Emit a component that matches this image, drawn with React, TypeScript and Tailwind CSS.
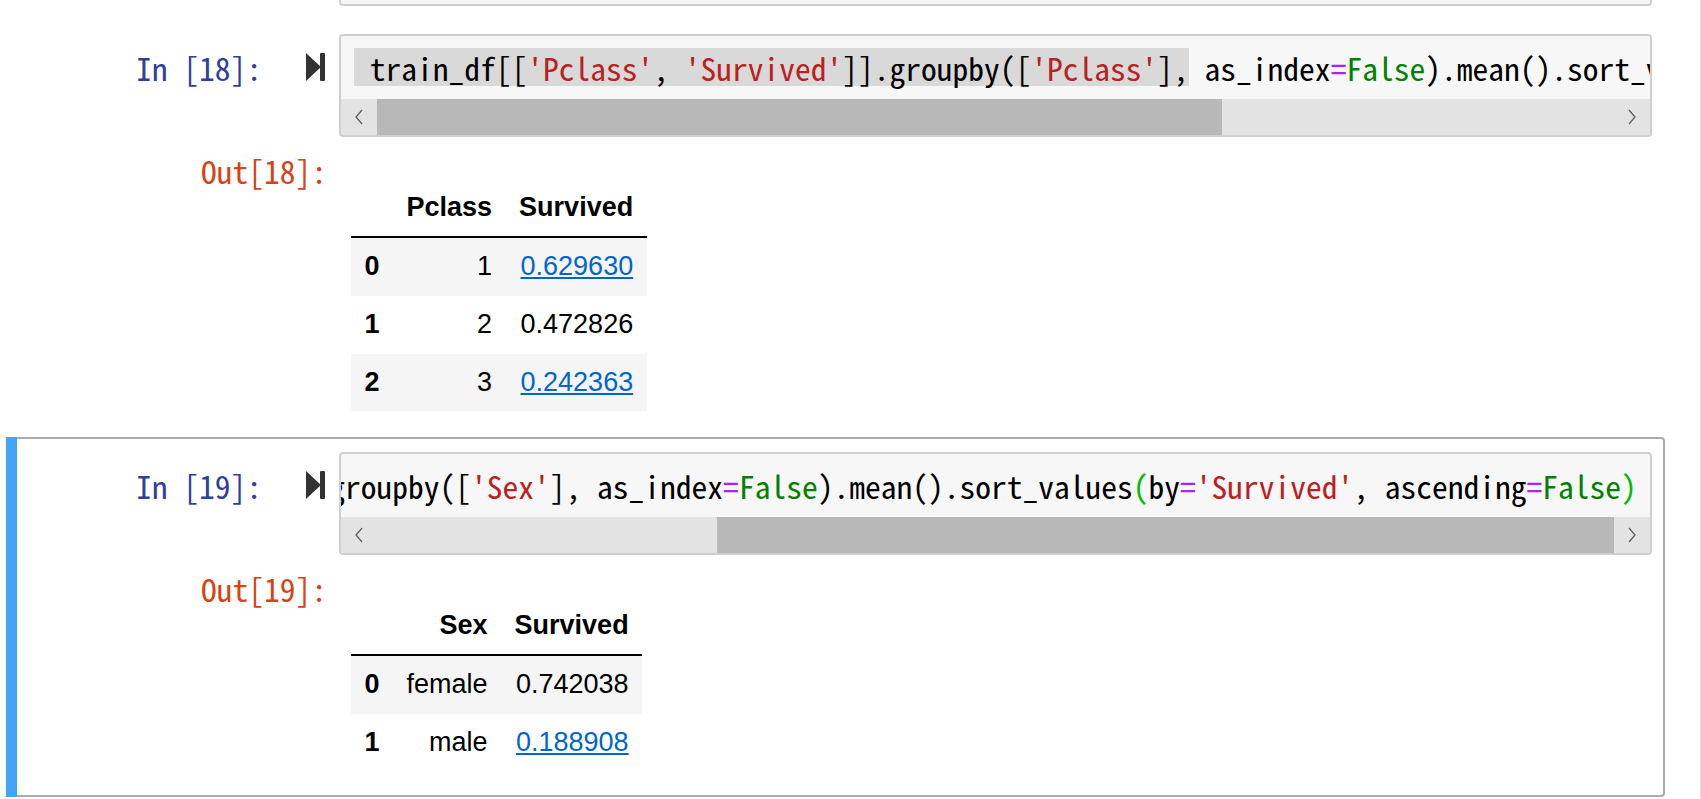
import React from 'react';

type Tok = [string, string];

const S = 'text-[#ba2121]';
const O = 'text-[#aa22ff]';
const K = 'text-[#008000]';
const B = 'text-[#00bb00]';
const N = 'text-black';

const mono = "font-['Noto_Sans_Mono_CJK_KR','Noto_Sans_Mono_CJK_SC','Liberation_Mono',monospace] text-[31.5px] leading-[38.25px]";

const Tokens = ({ toks }: { toks: Tok[] }) => (
    <>
        {toks.map(([t, c], i) => (
            <span key={i} className={c}>{t}</span>
        ))}
    </>
);

const RunIcon = () => (
    <svg width="19" height="28" viewBox="0 0 19 28">
        <polygon points="0,0 15,14 0,28" fill="#333333" />
        <rect x="14" y="0" width="5" height="28" rx="1" fill="#333333" />
    </svg>
);

const Chevron = ({ dir }: { dir: 'left' | 'right' }) => (
    <svg width="10" height="16" viewBox="0 0 10 16">
        <path d={dir === 'left' ? 'M8 1 L2 8 L8 15' : 'M2 1 L8 8 L2 15'} stroke="#606060" strokeWidth="1.3" fill="none" />
    </svg>
);

const Scrollbar = ({ thumb }: { thumb: string }) => (
    <div className="flex h-[36px] bg-[#e3e3e3]">
        <div className="w-[36px] flex items-center justify-center"><Chevron dir="left" /></div>
        <div className="flex-1 flex">
            <div className={thumb} />
        </div>
        <div className="w-[36px] flex items-center justify-center"><Chevron dir="right" /></div>
    </div>
);

type CellProps = {
    n: number;
    selected?: boolean;
    line: React.ReactNode;
    lineOffset: string;
    thumb: string;
    table: React.ReactNode;
};

const Cell = ({ n, selected, line, lineOffset, thumb, table }: CellProps) => (
    <div className={`relative w-[1659px] border-2 rounded-[4px] px-[11px] pt-[12.5px] pb-[12px] ${selected ? 'border-[#ababab]' : 'border-transparent'}`}>
        {selected && <div className="absolute -left-[2px] -top-[2px] -bottom-[2px] w-[11px] bg-[#42a5f5]" />}

        {/* input */}
        <div className="flex">
            <div className={`w-[320px] shrink-0 flex justify-end items-start pt-[14px] ${mono}`}>
                <span className="text-[#303f9f] whitespace-pre">{`In [${n}]:`}</span>
                <div className="ml-[44px] mr-[14px] h-[38.25px] flex items-center"><RunIcon /></div>
            </div>
            <div className="flex-1 min-w-0 border-2 border-[#cfcfcf] rounded-[4px] bg-[#f7f7f7] overflow-hidden">
                <div className="pt-[12px] pb-[13px] overflow-hidden">
                    <pre className={`whitespace-pre ${lineOffset} ${mono}`}>{line}</pre>
                </div>
                <Scrollbar thumb={thumb} />
            </div>
        </div>

        {/* output */}
        <div className="flex pb-[12px]">
            <div className={`w-[320px] shrink-0 flex justify-end pt-[14px] pr-[12px] ${mono}`}>
                <span className="text-[#d84315] whitespace-pre">{`Out[${n}]:`}</span>
            </div>
            <div className="flex-1 pl-[12px] pt-[41px]">{table}</div>
        </div>
    </div>
);

type Row = { idx: string; val: string; surv: string; link?: boolean };

const DataTable = ({ col, rows }: { col: string; rows: Row[] }) => (
    <table className="border-collapse font-['Liberation_Sans',Arial,sans-serif] text-[27px] leading-[31px] text-black">
        <thead>
            <tr className="border-b-[2px] border-black">
                <th className="px-[13.5px] py-[13.4px]" />
                <th className="px-[13.5px] py-[13.4px] text-right font-bold align-bottom">{col}</th>
                <th className="px-[13.5px] py-[13.4px] text-right font-bold align-bottom">Survived</th>
            </tr>
        </thead>
        <tbody>
            {rows.map((r, i) => (
                <tr key={r.idx} className={i % 2 === 0 ? 'bg-[#f5f5f5]' : 'bg-white'}>
                    <th className="px-[13.5px] py-[13.4px] text-left font-bold">{r.idx}</th>
                    <td className="px-[13.5px] py-[13.4px] text-right font-normal">{r.val}</td>
                    <td className="px-[13.5px] py-[13.4px] text-right font-normal">
                        {r.link ? <span className="text-[#0066cc] underline">{r.surv}</span> : r.surv}
                    </td>
                </tr>
            ))}
        </tbody>
    </table>
);

const line18: React.ReactNode = (
    <>
        <span className="inline-block bg-[#d9d9d9]">
            <Tokens toks={[[' train_df[[', N], ["'Pclass'", S], [', ', N], ["'Survived'", S], [']].groupby([', N], ["'Pclass'", S], ['],', N]]} />
        </span>
        <Tokens toks={[[' as_index', N], ['=', O], ['False', K], [').mean().sort_values(by', N], ['=', O], ["'Survived'", S], [', ascending', N], ['=', O], ['False', K], [')', N]]} />
    </>
);

const line19: React.ReactNode = (
    <Tokens toks={[[' train_df[[', N], ["'Sex'", S], [', ', N], ["'Survived'", S], [']].groupby([', N], ["'Sex'", S], ['], as_index', N], ['=', O], ['False', K], [').mean().sort_values', N], ['(', B], ['by', N], ['=', O], ["'Survived'", S], [', ascending', N], ['=', O], ['False', K], [')', B]]} />
);

export default function App() {
    return (
        <div className="w-[1701px] h-[799px] overflow-hidden bg-white">
            <div className="w-[1701px] h-[799px] border-r border-[#e6e6e6] pl-[6px]">
                {/* tail of the previous cell */}
                <div className="w-[1659px] border-2 border-t-0 border-transparent px-[11px] pb-[11.5px] flex">
                    <div className="w-[320px] shrink-0" />
                    <div className="flex-1 h-[6px] bg-[#f7f7f7] border-2 border-t-0 border-[#cfcfcf] rounded-b-[4px]" />
                </div>

                <Cell
                    n={18}
                    line={line18}
                    lineOffset="ml-[13px]"
                    thumb="ml-[0px] w-[845px] bg-[#b8b8b8]"
                    table={
                        <DataTable
                            col="Pclass"
                            rows={[
                                { idx: '0', val: '1', surv: '0.629630', link: true },
                                { idx: '1', val: '2', surv: '0.472826' },
                                { idx: '2', val: '3', surv: '0.242363', link: true },
                            ]}
                        />
                    }
                />

                <Cell
                    n={19}
                    selected
                    line={line19}
                    lineOffset="-ml-[500px]"
                    thumb="ml-[340px] w-[897px] bg-[#b8b8b8]"
                    table={
                        <DataTable
                            col="Sex"
                            rows={[
                                { idx: '0', val: 'female', surv: '0.742038' },
                                { idx: '1', val: 'male', surv: '0.188908', link: true },
                            ]}
                        />
                    }
                />
            </div>
        </div>
    );
}
